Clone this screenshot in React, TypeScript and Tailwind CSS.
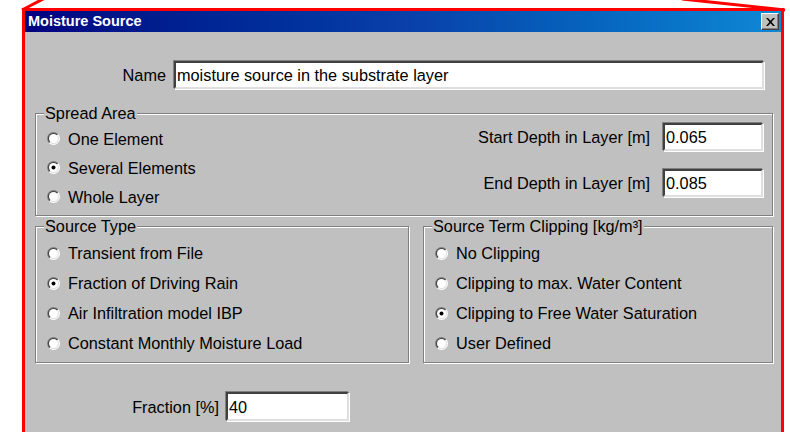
import React from "react";

function Radio({ checked = false }: { checked?: boolean }) {
  return (
    <svg width="13" height="13" viewBox="0 0 13 13" className="shrink-0">
      <defs>
        <linearGradient id="rOuter" x1="0" y1="0" x2="1" y2="1">
          <stop offset="0.5" stopColor="#808080" />
          <stop offset="0.5" stopColor="#ffffff" />
        </linearGradient>
        <linearGradient id="rInner" x1="0" y1="0" x2="1" y2="1">
          <stop offset="0.5" stopColor="#404040" />
          <stop offset="0.5" stopColor="#dfdfdf" />
        </linearGradient>
      </defs>
      <circle cx="6.5" cy="6.5" r="6.5" fill="url(#rOuter)" />
      <circle cx="6.5" cy="6.5" r="5.5" fill="url(#rInner)" />
      <circle cx="6.5" cy="6.5" r="4.5" fill="#ffffff" />
      {checked && <circle cx="6.5" cy="6.5" r="2" fill="#000000" />}
    </svg>
  );
}

function Option({ label, checked, rowClass }: { label: string; checked?: boolean; rowClass: string }) {
  return (
    <div className={`flex items-center gap-[8px] ${rowClass}`}>
      <Radio checked={checked} />
      <span className="whitespace-nowrap">{label}</span>
    </div>
  );
}

function Field({ value, className }: { value: string; className: string }) {
  return (
    <div
      className={`bg-white border-2 border-t-[#404040] border-l-[#404040] border-r-[#dfdfdf] border-b-[#dfdfdf] shadow-[-1px_-1px_0_#808080,1px_1px_0_#ffffff] pl-[1px] flex items-center whitespace-nowrap overflow-hidden ${className}`}
    >
      {value}
    </div>
  );
}

function GroupBox({ title, className, children }: { title: React.ReactNode; className: string; children: React.ReactNode }) {
  return (
    <div className={`relative border border-[#808080] shadow-[inset_1px_1px_0_#ffffff,1px_1px_0_#ffffff] ${className}`}>
      <span className="absolute -top-[10px] left-[8px] px-[1px] bg-[#c0c0c0] leading-[18px] whitespace-nowrap">{title}</span>
      {children}
    </div>
  );
}

export default function App() {
  return (
    <div className="relative w-[790px] h-[432px] overflow-hidden bg-white text-black text-[16.3px] leading-[18px] font-['Liberation_Sans',Arial,sans-serif]">
      <div className="ml-[22px] mt-[8px] w-[762px] h-[440px] border-[3px] border-b-0 border-[#ff0000] bg-[#c0c0c0]">
        {/* title bar */}
        <div className="h-[21px] flex items-center justify-between pl-[3px] pr-[2px] bg-linear-to-r from-[#000080] via-[#0a3fa8] to-[#1088d4]">
          <span className="text-white font-bold text-[14.5px] leading-none">Moisture Source</span>
          <div className="w-[18px] h-[17px] bg-[#c0c0c0] border border-t-white border-l-white border-r-[#404040] border-b-[#404040] shadow-[inset_-1px_-1px_0_#808080] flex items-center justify-center">
            <svg width="9" height="8" viewBox="0 0 9 8">
              <path d="M0 0h2l2.5 2.8L7 0h2L5.5 4 9 8H7L4.5 5.2 2 8H0l3.5-4z" fill="#000" />
            </svg>
          </div>
        </div>

        <div className="pt-[29px]">
          <div className="flex items-center">
            <div className="w-[141px] text-right">Name</div>
            <Field value="moisture source in the substrate layer" className="ml-[8px] w-[590px] h-[28px]" />
          </div>

          <GroupBox title="Spread Area" className="mt-[24px] ml-[10px] w-[738px] h-[103px] flex justify-between">
            <div className="pt-[10px] pl-[11px]">
              <Option label="One Element" rowClass="h-[29px]" />
              <Option label="Several Elements" checked rowClass="h-[29px]" />
              <Option label="Whole Layer" rowClass="h-[29px]" />
            </div>
            <div className="pt-[9px] pr-[9px] flex flex-col items-end gap-[18px]">
              <div className="flex items-center gap-[13px]">
                <span>Start Depth in Layer [m]</span>
                <Field value="0.065" className="w-[100px] h-[28px]" />
              </div>
              <div className="flex items-center gap-[13px]">
                <span>End Depth in Layer [m]</span>
                <Field value="0.085" className="w-[100px] h-[28px]" />
              </div>
            </div>
          </GroupBox>

          <div className="mt-[10px] ml-[10px] flex gap-[14px]">
            <GroupBox title="Source Type" className="w-[374px] h-[137px] pt-[11px] pl-[11px]">
              <Option label="Transient from File" rowClass="h-[30px]" />
              <Option label="Fraction of Driving Rain" checked rowClass="h-[30px]" />
              <Option label="Air Infiltration model IBP" rowClass="h-[30px]" />
              <Option label="Constant Monthly Moisture Load" rowClass="h-[30px]" />
            </GroupBox>
            <GroupBox title="Source Term Clipping [kg/m³]" className="w-[350px] h-[137px] pt-[11px] pl-[11px]">
              <Option label="No Clipping" rowClass="h-[30px]" />
              <Option label="Clipping to max. Water Content" rowClass="h-[30px]" />
              <Option label="Clipping to Free Water Saturation" checked rowClass="h-[30px]" />
              <Option label="User Defined" rowClass="h-[30px]" />
            </GroupBox>
          </div>

          <div className="mt-[29px] flex items-center">
            <div className="w-[194px] text-right">Fraction [%]</div>
            <Field value="40" className="ml-[7px] w-[123px] h-[29px]" />
          </div>
        </div>
      </div>

      {/* callout lines */}
      <svg className="absolute inset-0 pointer-events-none" width="790" height="432">
        <line x1="22" y1="10" x2="45" y2="-2" stroke="#ff0000" strokeWidth="3" />
        <line x1="785" y1="10" x2="682" y2="-1" stroke="#ff0000" strokeWidth="3" />
      </svg>
    </div>
  );
}
